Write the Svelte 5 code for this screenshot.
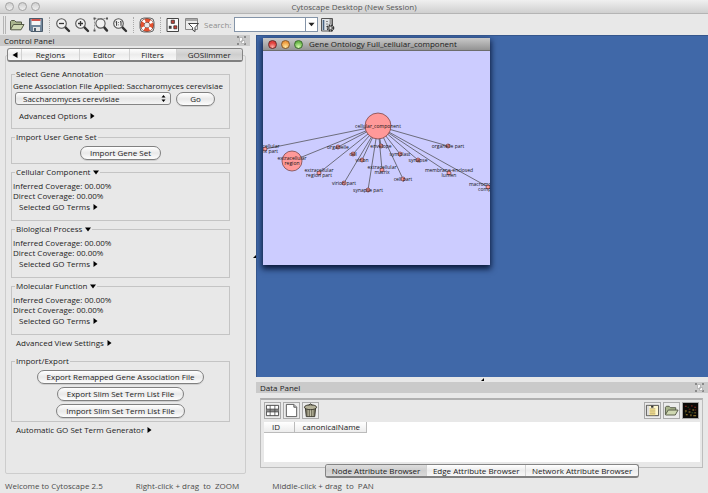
<script>
  const tabs = [
    { name: 'Regions', share: 58 },
    { name: 'Editor', share: 50 },
    { name: 'Filters', share: 47 },
    { name: 'GOSlimmer', share: 67 }
  ];
  const ontologies = ['Cellular Component', 'Biological Process', 'Molecular Function'];
  const browsers = ['Node Attribute Browser', 'Edge Attribute Browser', 'Network Attribute Browser'];
  const exportsList = [
    'Export Remapped Gene Association File',
    'Export Slim Set Term List File',
    'Import Slim Set Term List File'
  ];
  const root = { x: 115, y: 75 };
  const nodes = [
    { x: 2, y: 98, lines: ['extracellular', 'matrix part'] },
    { x: 29, y: 110, r: 10, lines: ['extracellular', 'region'] },
    { x: 75, y: 96, lines: ['organelle'] },
    { x: 90, y: 103, lines: ['cell'] },
    { x: 99, y: 109, lines: ['virion'] },
    { x: 118, y: 95, lines: ['envelope'] },
    { x: 137, y: 103, lines: ['symplast'] },
    { x: 155, y: 109, lines: ['synapse'] },
    { x: 185, y: 95, lines: ['organelle part'] },
    { x: 56, y: 122, lines: ['extracellular', 'region part'] },
    { x: 119, y: 119, lines: ['extracellular', 'matrix'] },
    { x: 81, y: 132, lines: ['virion part'] },
    { x: 105, y: 139, lines: ['synapse part'] },
    { x: 140, y: 128, lines: ['cell part'] },
    { x: 186, y: 122, lines: ['membrane-enclosed', 'lumen'] },
    { x: 225, y: 136, lines: ['macromolecular', 'complex'] }
  ];
  let species = $state('Saccharomyces cerevisiae');
  let query = $state('');
  let tab = $state('GOSlimmer');
  let browser = $state('Node Attribute Browser');
</script>

{#snippet right()}<svg class="tri" viewBox="0 0 5 6" aria-hidden="true"><path d="M0.5 0L4.5 3L0.5 6Z" /></svg>{/snippet}
{#snippet down()}<svg class="tri wide" viewBox="0 0 6 5" aria-hidden="true"><path d="M0 0.5H6L3 4.5Z" /></svg>{/snippet}
{#snippet float()}
  <svg viewBox="0 0 9 9" width="9" height="9" fill="none" aria-hidden="true">
    <path d="M0 0H2V2H0ZM7 0H9V2H7ZM7 7H9V9H7ZM0 7H2V9H0Z" fill="#8a8a8a" />
    <path d="M2.5 1.5H5.5V5.5H2.5ZM4.5 4.5H7.5V7.5H4.5Z" fill="#fafafa" stroke="#a8a8a8" stroke-width=".7" />
  </svg>
{/snippet}
{#snippet folder()}
  <svg viewBox="0 0 16 16" aria-hidden="true">
    <path d="M1.5 12.5V4.5L2.5 3.5H5.5L7 5H12.5V7.5" fill="#a9b58c" stroke="#535945" />
    <path d="M1.5 12.5L4.5 7.5H15L12 12.8H2Z" fill="#cfd8b2" stroke="#535945" />
  </svg>
{/snippet}
{#snippet lens()}
  <path d="M10.2 10.2L14 14" stroke="#333" stroke-width="2.4" stroke-linecap="round" />
  <circle cx="6.5" cy="6.5" r="4.8" fill="#f1f1f1" stroke="#555" stroke-width="1.1" />
{/snippet}

<div class="app">
  <header class="titlebar">
    <span class="lights"><i></i><i></i><i></i></span>
    <span class="title">Cytoscape Desktop (New Session)</span>
  </header>

  <div class="toolbar">
    <span class="handle"></span>
    <button aria-label="Open">{@render folder()}</button>
    <button aria-label="Save">
      <svg viewBox="0 0 16 16"><path d="M1.5 1.5H14.5V14.5H3L1.5 13Z" fill="#71869b" stroke="#4b5b6b" /><path d="M3.5 2H12.5V8H3.5Z" fill="#f6f6f6" /><path d="M3.5 2H12.5V4H3.5Z" fill="#d0534c" /><path d="M5 10H12V14H5Z" fill="#e4e4e4" /><path d="M6 11H8V14H6Z" fill="#4b5b6b" /></svg>
    </button>
    <span class="sep"></span>
    <button aria-label="Zoom out"><svg viewBox="0 0 16 16">{@render lens()}<path d="M4 6.5H9" stroke="#333" stroke-width="1.3" /></svg></button>
    <button aria-label="Zoom in"><svg viewBox="0 0 16 16">{@render lens()}<path d="M4 6.5H9M6.5 4V9" stroke="#333" stroke-width="1.3" /></svg></button>
    <button aria-label="Zoom to selection"><svg viewBox="0 0 16 16"><path d="M1.5 1.5H14M1.5 1.5V13.5" stroke="#999" stroke-dasharray="2 1" fill="none" /><path d="M10.6 9.6L14 13.6" stroke="#333" stroke-width="2.4" stroke-linecap="round" /><circle cx="7.5" cy="6.5" r="4.6" fill="#f1f1f1" stroke="#555" stroke-width="1.1" /><path d="M0.5 0.5H2.5V2.5H0.5ZM13 0.5H15V2.5H13ZM0.5 12.5H2.5V14.5H0.5Z" fill="#555" /></svg></button>
    <button aria-label="Zoom to actual size"><svg viewBox="0 0 16 16">{@render lens()}<path d="M3.6 5L4.6 4.4V8.8M8 5L9 4.4V8.8" fill="none" stroke="#333" /><path d="M6.2 5.2H7V6H6.2ZM6.2 7.4H7V8.2H6.2Z" fill="#333" /></svg></button>
    <span class="sep"></span>
    <button aria-label="Help">
      <svg viewBox="0 0 16 16"><path d="M2 2L5 1L11 1L14 2L15 5V11L14 14L11 15H5L2 14L1 11V5Z" fill="none" stroke="#666" /><circle cx="8" cy="8" r="4.7" fill="none" stroke="#5c2b22" stroke-width="4.2" /><circle cx="8" cy="8" r="4.7" fill="none" stroke="#e4512f" stroke-width="3.2" /><circle cx="8" cy="8" r="4.7" fill="none" stroke="#fff" stroke-width="3.2" stroke-dasharray="2.4 4.98" stroke-dashoffset="-2.5" /></svg>
    </button>
    <span class="sep"></span>
    <button aria-label="Set visual style">
      <svg viewBox="0 0 16 16"><path d="M1 1.5H12.5V14.5H1Z" fill="#fafafa" stroke="#444" /><path d="M5.2 3.2H8.4V6.4H5.2Z" fill="#c0443a" stroke="#222" stroke-width=".7" /><path d="M2.8 8.8H5.6V11.8H2.8Z" fill="#3d3d3d" /><path d="M7.8 8.8H10.8V11.8H7.8Z" fill="#cf3d30" stroke="#222" stroke-width=".7" /></svg>
    </button>
    <button aria-label="Filters">
      <svg viewBox="0 0 16 16"><path d="M0.5 1.5H12.5V12.5H0.5Z" fill="#ececec" stroke="#888" /><path d="M1 2H12V4H1Z" fill="#a8a8a8" /><path d="M3.5 6.5H13.5L10 10.6V14.6L7.6 13V10.6Z" fill="#fff" stroke="#444" /></svg>
    </button>
    <label for="q">Search:</label>
    <span class="search">
      <input id="q" bind:value={query} />
      <button aria-label="Search options"><svg viewBox="0 0 8 5"><path d="M0.5 0.5H7.5L4 4.5Z" fill="#222" /></svg></button>
    </span>
    <button aria-label="Configure search">
      <svg viewBox="0 0 16 16"><path d="M0.5 1.5H11.5V14H0.5Z" fill="#dfe3e7" stroke="#555" /><path d="M2.5 3V13" stroke="#466282" stroke-width="1.6" /><path d="M5 4.5H7M5 7H7M5 9.5H7" stroke="#888" /><path d="M8.5 2H11V7H8.5Z" fill="#999" /><circle cx="9.5" cy="11" r="3" fill="#bbb" stroke="#333" stroke-width="1.6" stroke-dasharray="1.6 .8" /><circle cx="9.5" cy="11" r="1.7" fill="#ddd" stroke="#333" stroke-width=".8" /></svg>
    </button>
  </div>

  <main>
    <section class="control">
      <h2>Control Panel {@render float()}</h2>
      <div class="body">
        <div class="frame"></div>
        <div class="tabs">
          <button class="prev" aria-label="Previous tab"><svg viewBox="0 0 6 6"><path d="M5.5 0V6L0.5 3Z" /></svg></button>
          {#each tabs as t}
            <button class="view" class:on={tab === t.name} style:flex-grow={t.share} onclick={() => (tab = t.name)}>{t.name}</button>
          {/each}
        </div>
        <div class="groups">
          <fieldset class="annot">
            <legend>Select Gene Annotation</legend>
            <label for="sp">Gene Association File Applied: Saccharomyces cerevisiae</label>
            <div class="pick">
              <span class="sel">
                <select id="sp" bind:value={species}><option>Saccharomyces cerevisiae</option></select>
                <svg viewBox="0 0 5 8" aria-hidden="true"><path d="M0.5 3L2.5 0.5L4.5 3ZM0.5 5L2.5 7.5L4.5 5Z" /></svg>
              </span>
              <button class="pill go">Go</button>
            </div>
            <button class="more">Advanced Options {@render right()}</button>
          </fieldset>
          <fieldset class="user">
            <legend>Import User Gene Set</legend>
            <button class="pill">Import Gene Set</button>
          </fieldset>
          {#each ontologies as o}
            <fieldset class="onto">
              <legend><button>{o} {@render down()}</button></legend>
              <p>Inferred Coverage: 00.00%</p>
              <p>Direct Coverage: 00.00%</p>
              <button class="more">Selected GO Terms {@render right()}</button>
            </fieldset>
          {/each}
          <button class="more outer">Advanced View Settings {@render right()}</button>
          <fieldset class="export">
            <legend>Import/Export</legend>
            {#each exportsList as e}<button class="pill">{e}</button>{/each}
          </fieldset>
          <button class="more outer">Automatic GO Set Term Generator {@render right()}</button>
        </div>
      </div>
    </section>
    <div class="split"><svg viewBox="0 0 3 3"><path d="M0 3L3 0V3Z" /></svg></div>

    <div class="work">
      <section class="desktop">
        <article class="window">
          <header>
            <span class="lights colour"><i></i><i></i><i></i></span>
            <span>Gene Ontology Full_cellular_component</span>
          </header>
          <svg class="graph" viewBox="0 0 227 214" width="227" height="214">
            {#each nodes as n}<line x1={root.x} y1={root.y} x2={n.x} y2={n.y} />{/each}
            <circle cx={root.x} cy={root.y} r="13" />
            {#each nodes as n}<circle cx={n.x} cy={n.y} r={n.r ?? 2} />{/each}
            <text x={root.x} y={root.y + 2}>cellular_component</text>
            {#each nodes as n}
              {#each n.lines as l, i}
                <text x={n.x} y={n.y + 2 + (n.lines.length > 1 ? i * 5 - 3 : 0)}>{l}</text>
              {/each}
            {/each}
          </svg>
        </article>
      </section>
      <div class="hsplit"><svg viewBox="0 0 3 3"><path d="M0 3L3 0V3Z" /></svg></div>
      <section class="data">
        <h2>Data Panel {@render float()}</h2>
        <div class="sheet">
          <div class="tools">
            <button aria-label="Select attributes"><svg viewBox="0 0 16 16"><path d="M1.5 2.5H14.5V13.5H1.5Z" fill="#fff" stroke="#444" /><path d="M1.5 6.5H14.5V9.5H1.5Z" fill="#888" /><path d="M1.5 6.5H14.5M1.5 9.5H14.5M5.5 2.5V13.5M10.5 2.5V13.5" stroke="#444" stroke-width=".8" /></svg></button>
            <button aria-label="New attribute"><svg viewBox="0 0 16 16"><path d="M2.5 1.5H10.5L13.5 4.5V14.5H2.5Z" fill="#fff" stroke="#555" /><path d="M10.5 1.5V4.5H13.5" fill="#ccc" stroke="#555" /></svg></button>
            <button aria-label="Delete attribute"><svg viewBox="0 0 16 16"><path d="M2.5 5H13.5L12.5 14.5H3.5Z" fill="#77745f" stroke="#3a382e" /><path d="M5.5 7V14M8 7V14M10.5 7V14" stroke="#c9c6ae" /><ellipse cx="8" cy="4.5" rx="6.5" ry="2.6" fill="#b4b199" stroke="#3a382e" /><path d="M6 2.5L8 0.8L10 2.5" fill="none" stroke="#3a382e" /></svg></button>
            <span class="fill"></span>
            <button aria-label="Attribute editor"><svg viewBox="0 0 16 16"><path d="M1.5 2.5H14.5V13.5H1.5Z" fill="#fdf6cf" stroke="#444" /><path d="M2 3H4.5V13H2Z" fill="#ddd" /><path d="M5 6H11V13H5Z" fill="#ecd98a" /><path d="M5 6H11M5 8.5H11M5 11H11" stroke="#b5a878" stroke-width=".7" /><path d="M6.5 3H9V5H6.5Z" fill="#333" /></svg></button>
            <button aria-label="Import attributes">{@render folder()}</button>
            <button class="matrix" aria-label="Map matrix"><svg viewBox="0 0 16 16"><path d="M0 0H16V16H0Z" fill="#0b0a08" /><path d="M2 8H4V9H2ZM6 9H8V10H6ZM10 7H12V8H10ZM12 10H14V11H12ZM3 12H5V13H3ZM8 12H9V14H8ZM11 13H14V14H11Z" fill="#a98c35" /><path d="M2 3H4V4H2ZM9 2H10V4H9ZM12 4H14V5H12ZM6 6H8V7H6ZM13 7H14V8H13Z" fill="#8e2a20" /><path d="M5 4H6V5H5ZM2 10H3V11H2ZM9 10H11V11H9Z" fill="#3d6b32" /></svg></button>
          </div>
          <div class="grid">
            <table><thead><tr><th class="id">ID</th><th class="name">canonicalName</th></tr></thead></table>
          </div>
        </div>
        <div class="tabs browsers">
          {#each browsers as b}
            <button class:on={browser === b} onclick={() => (browser = b)}>{b}</button>
          {/each}
        </div>
      </section>
    </div>
  </main>

  <footer>
    <span>Welcome to Cytoscape 2.5</span>
    <span>Right-click + drag&nbsp; to&nbsp; ZOOM</span>
    <span>Middle-click + drag&nbsp; to&nbsp; PAN</span>
  </footer>
</div>

<style>
  :global(body) { margin: 0; }
  .app {
    min-height: 100vh;
    display: flex;
    flex-direction: column;
    background: #e8e8e8;
    color: #1c1c1c;
    font: 8px/10px 'Open Sans', 'Noto Sans', sans-serif;
  }
  .app * { box-sizing: border-box; }
  button, input, select { font: inherit; color: inherit; margin: 0; padding: 0; border: 0; background: none; }
  button { display: flex; align-items: center; justify-content: center; white-space: nowrap; }
  svg { flex: none; }
  h2, p { margin: 0; font: inherit; }

  .titlebar {
    position: relative;
    height: 14px;
    display: flex;
    align-items: center;
    justify-content: center;
    background: linear-gradient(#f0f0f0, #cfcfcf);
    border-bottom: 1px solid #b4b4b4;
    color: #555;
  }
  .lights { position: absolute; left: 5px; top: 2px; display: flex; gap: 4px; }
  .lights i { width: 9px; height: 9px; border-radius: 50%; border: 1px solid #a3a3a3; background: linear-gradient(#cfcfcf, #efefef); }
  .lights.colour i { border-color: #6b2a28; background: radial-gradient(circle at 50% 85%, #ffb0a8, #e0403c 60%); }
  .lights.colour i:nth-child(2) { border-color: #85592a; background: radial-gradient(circle at 50% 85%, #ffe9a0, #ee9a3c 70%); }
  .lights.colour i:nth-child(3) { border-color: #3a6a2c; background: radial-gradient(circle at 50% 85%, #d8ffb0, #68b548 70%); }

  .toolbar { height: 21px; display: flex; align-items: center; gap: 3px; padding: 0 3px; }
  .toolbar button, .toolbar svg { width: 16px; height: 16px; }
  .toolbar label { color: #8e8e8e; }
  .handle { width: 3px; height: 18px; border: solid #b5b5b5; border-width: 0 1px; }
  .sep { width: 1px; height: 16px; margin: 0 2px; border-left: 1px dotted #aaa; }
  .search { display: flex; width: 84px; height: 15px; border: 1px solid #8494a8; background: #fff; }
  .search input { flex: 1; min-width: 0; padding: 0 2px; outline: 0; }
  .toolbar .search button { width: 12px; height: 13px; border-left: 1px solid #8494a8; }
  .toolbar .search svg { width: 7px; height: 5px; }

  main { flex: 1; display: flex; min-height: 0; }
  .control { width: 250px; flex: none; display: flex; flex-direction: column; }
  h2 { display: flex; align-items: center; justify-content: space-between; height: 11px; padding: 0 4px; background: #cacaca; }
  .body { flex: 1; position: relative; padding: 2px 7px 0; }
  .frame { position: absolute; inset: 9px 4px 4px 5px; border: 1px solid #cdcdcd; border-radius: 2px; }
  .tabs { position: relative; display: flex; height: 14px; border: 1px solid #858585; border-bottom: 2px solid #808080; border-radius: 3px; background: linear-gradient(#fff, #ececec 50%, #f8f8f8); overflow: hidden; }
  .tabs button { flex: 1 1 auto; padding: 0 5px; border-left: 1px solid #d2d2d2; }
  .tabs button:first-child { border-left: 0; }
  .tabs .view { flex-basis: 0; padding: 0; }
  .tabs .prev { flex: 0 0 13px; padding: 0; }
  .prev svg { width: 6px; height: 6px; }
  .tabs .on { background: linear-gradient(#dedede, #cecece 50%, #dadada); }

  .groups { position: relative; padding: 6px 13px 0 4px; display: flex; flex-direction: column; gap: 2px; }
  fieldset { min-width: 0; margin: 0; padding: 0 1px; border: 1px solid #c4c4c4; display: flex; flex-direction: column; align-items: flex-start; }
  legend { margin-left: 2px; padding: 0 1px; height: 12px; line-height: 12px; }
  legend button { height: 12px; }
  .tri { width: 5px; height: 6px; margin-left: 3px; fill: #000; }
  .tri.wide { width: 6px; height: 5px; }
  .annot { height: 61px; }
  .annot label { line-height: 12px; white-space: nowrap; }
  .pick { display: flex; gap: 5px; align-self: stretch; margin-bottom: 4px; }
  .sel { position: relative; width: 156px; height: 13px; margin-left: 2px; }
  select { width: 100%; height: 13px; padding: 0 7px; appearance: none; border: 1px solid #858585; border-radius: 3px; background: linear-gradient(#fff, #e6e6e6 50%, #f4f4f4); line-height: 11px; }
  .sel svg { position: absolute; right: 5px; top: 2px; width: 5px; height: 9px; }
  .pill { height: 14px; padding: 0 9px; border: 1px solid #808080; border-radius: 7px; background: linear-gradient(#fff, #e9e9e9 50%, #fdfdfd); box-shadow: 0 1px 0 #cfcfcf; }
  .go { width: 39px; }
  .more { height: 12px; margin-left: 6px; }
  .outer { align-self: flex-start; margin-left: 5px; }
  .user { height: 33px; padding-top: 3px; align-items: center; }
  .onto { height: 55px; padding-top: 3px; }
  .export { height: 67px; margin-top: 4px; padding-top: 3px; align-items: center; gap: 3px; }
  .split { width: 6px; flex: none; display: flex; align-items: center; justify-content: flex-end; }
  .split svg, .hsplit svg { width: 3px; height: 3px; }

  .work { flex: 1; min-width: 0; display: flex; flex-direction: column; }
  .desktop { position: relative; flex: 1; min-height: 342px; overflow: hidden; background: #4068a8; border: solid #35568c; border-width: 1px 0 0 1px; }
  .window { position: absolute; left: 6px; top: 2px; width: 227px; box-shadow: 0 3px 6px 1px #0b1a3c; background: #ccf; }
  .window header { position: relative; height: 13px; display: flex; align-items: center; padding-left: 46px; background: linear-gradient(#c9c9c9, #939393); border-bottom: 1px solid #6d6d6d; }
  .graph { display: block; overflow: hidden; }
  .graph line { stroke: #444; stroke-width: .7; }
  .graph circle { fill: #ff9999; stroke: #6b3a3a; stroke-width: .7; }
  .graph text { font-size: 5px; text-anchor: middle; fill: #111; }

  .hsplit { height: 5px; flex: none; display: flex; justify-content: center; align-items: center; }
  .data { flex: none; height: 96px; display: flex; flex-direction: column; }
  .sheet { margin: 5px 5px 0 4px; height: 70px; padding: 2px 2px 0 3px; border: 1px solid #bdbdbd; border-top: 2px solid #b0b0b0; }
  .tools { display: flex; gap: 1px; height: 20px; }
  .tools button { width: 17px; height: 17px; border: 1px solid #aaa; background: #ececec; margin-right: 1px; }
  .tools svg { width: 15px; height: 15px; }
  .fill { flex: 1; }
  .grid { height: 40px; background: #fff; }
  table { border-collapse: collapse; }
  th { height: 10px; padding: 0 0 0 8px; font-weight: 400; line-height: 9px; background: linear-gradient(#fff, #ececec); border: solid #bbb; border-width: 0 1px 1px 0; text-align: left; }
  .id { width: 30px; }
  .name { width: 72px; }
  .browsers { align-self: center; width: 314px; margin-top: -4px; flex: none; }

  footer { flex: none; height: 16px; display: flex; gap: 33px; padding: 0 5px 1px; align-items: center; color: #4c4c4c; }
</style>
